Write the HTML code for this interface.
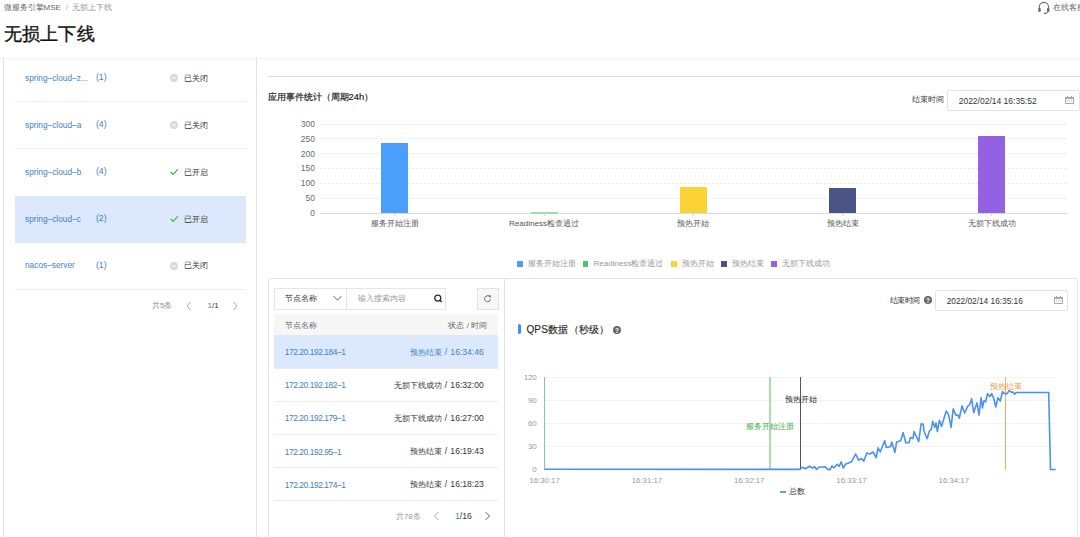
<!DOCTYPE html>
<html><head><meta charset="utf-8">
<style>
*{box-sizing:border-box;margin:0;padding:0}
html,body{width:1080px;height:537px;overflow:hidden;background:#fff}
body{position:relative;font-family:"Liberation Sans",sans-serif;font-size:8px;color:#333;font-weight:500}
.a{position:absolute}
.t{position:absolute;white-space:nowrap}
</style></head><body>
<div class="t" style="left:3.5px;top:3px;font-size:8px;line-height:10px;color:#666;">微服务引擎MSE<span style="color:#aaa;margin:0 4px 0 5px">/</span><span style="color:#999">无损上下线</span></div>
<div class="t" style="left:3.5px;top:23px;font-size:18px;line-height:22px;color:#111;font-weight:500;-webkit-text-stroke:0.35px #111;letter-spacing:0.25px;">无损上下线</div>
<svg class="a" style="left:1037px;top:0px" width="14" height="16" viewBox="0 0 14 16">
<path d="M2.3 9.5 V7 A4.6 4.6 0 0 1 11.5 7 V9.5" fill="none" stroke="#6a6a6a" stroke-width="1.1"/>
<rect x="1.3" y="8.1" width="2.4" height="3.7" fill="#6a6a6a"/><rect x="10" y="8.1" width="2.4" height="3.7" fill="#6a6a6a"/>
<path d="M11.2 11.6 Q10.9 13.2 8.6 13.3" fill="none" stroke="#6a6a6a" stroke-width="0.9"/><rect x="7" y="12.6" width="2.2" height="1.3" rx="0.5" fill="#6a6a6a"/></svg>
<div class="t" style="left:1053.1px;top:1.5px;font-size:8.4px;line-height:10.4px;color:#666;font-weight:400;">在线客服</div>
<div class="a" style="left:0px;top:56.5px;width:1080px;height:6px;background:linear-gradient(#f7f7f7,#fff);"></div>
<div class="a" style="left:3px;top:57px;width:1px;height:480px;background:#e2e2e6;"></div>
<div class="a" style="left:256px;top:57px;width:1px;height:480px;background:#e2e2e6;"></div>
<div class="t" style="left:25px;top:72.8px;font-size:8.3px;line-height:10.3px;color:#3f81c8;font-weight:400;">spring&#8211;cloud&#8211;z...</div>
<div class="t" style="left:96px;top:72.3px;font-size:8.6px;line-height:10.6px;color:#3f81c8;font-weight:400;">(1)</div>
<svg class="a" style="left:170px;top:74.3px" width="8" height="8" viewBox="0 0 8 8"><circle cx="4" cy="4" r="3.9" fill="#d9d9d9"/><rect x="1.8" y="3.5" width="4.4" height="1" fill="#fff"/></svg>
<div class="t" style="left:183.8px;top:73.8px;font-size:8px;line-height:10px;color:#333;">已关闭</div>
<div class="a" style="left:14.5px;top:101.39999999999999px;width:231px;height:1px;background:#efefef;"></div>
<div class="t" style="left:25px;top:119.69999999999999px;font-size:8.3px;line-height:10.3px;color:#3f81c8;font-weight:400;">spring&#8211;cloud&#8211;a</div>
<div class="t" style="left:96px;top:119.19999999999999px;font-size:8.6px;line-height:10.6px;color:#3f81c8;font-weight:400;">(4)</div>
<svg class="a" style="left:170px;top:121.19999999999999px" width="8" height="8" viewBox="0 0 8 8"><circle cx="4" cy="4" r="3.9" fill="#d9d9d9"/><rect x="1.8" y="3.5" width="4.4" height="1" fill="#fff"/></svg>
<div class="t" style="left:183.8px;top:120.69999999999999px;font-size:8px;line-height:10px;color:#333;">已关闭</div>
<div class="a" style="left:14.5px;top:148.29999999999998px;width:231px;height:1px;background:#efefef;"></div>
<div class="t" style="left:25px;top:166.6px;font-size:8.3px;line-height:10.3px;color:#3f81c8;font-weight:400;">spring&#8211;cloud&#8211;b</div>
<div class="t" style="left:96px;top:166.1px;font-size:8.6px;line-height:10.6px;color:#3f81c8;font-weight:400;">(4)</div>
<svg class="a" style="left:170px;top:167.6px" width="9" height="8" viewBox="0 0 9 8"><path d="M0.7 4 L3.2 6.4 L7.9 1.2" fill="none" stroke="#3cb43c" stroke-width="1.1"/></svg>
<div class="t" style="left:183.8px;top:167.6px;font-size:8px;line-height:10px;color:#333;">已开启</div>
<div class="a" style="left:14.5px;top:195.5px;width:231px;height:47px;background:#dce9fc;"></div>
<div class="t" style="left:25px;top:213.5px;font-size:8.3px;line-height:10.3px;color:#3f81c8;font-weight:400;">spring&#8211;cloud&#8211;c</div>
<div class="t" style="left:96px;top:213.0px;font-size:8.6px;line-height:10.6px;color:#3f81c8;font-weight:400;">(2)</div>
<svg class="a" style="left:170px;top:214.5px" width="9" height="8" viewBox="0 0 9 8"><path d="M0.7 4 L3.2 6.4 L7.9 1.2" fill="none" stroke="#3cb43c" stroke-width="1.1"/></svg>
<div class="t" style="left:183.8px;top:214.5px;font-size:8px;line-height:10px;color:#333;">已开启</div>
<div class="t" style="left:25px;top:260.4px;font-size:8.3px;line-height:10.3px;color:#3f81c8;font-weight:400;">nacos&#8211;server</div>
<div class="t" style="left:96px;top:259.9px;font-size:8.6px;line-height:10.6px;color:#3f81c8;font-weight:400;">(1)</div>
<svg class="a" style="left:170px;top:261.9px" width="8" height="8" viewBox="0 0 8 8"><circle cx="4" cy="4" r="3.9" fill="#d9d9d9"/><rect x="1.8" y="3.5" width="4.4" height="1" fill="#fff"/></svg>
<div class="t" style="left:183.8px;top:261.4px;font-size:8px;line-height:10px;color:#333;">已关闭</div>
<div class="a" style="left:14.5px;top:289.0px;width:231px;height:1px;background:#efefef;"></div>
<div class="t" style="left:152px;top:301px;font-size:8px;line-height:10px;color:#8c8c8c;">共5条</div>
<svg class="a" style="left:186px;top:300.5px" width="6" height="10" viewBox="0 0 6 10"><path d="M4.5 1 L1 5 L4.5 9" fill="none" stroke="#aaa" stroke-width="1"/></svg>
<div class="t" style="left:207.5px;top:300.5px;font-size:8px;line-height:10px;color:#333;font-weight:400;"><span style="color:#3f81c8">1</span>/1</div>
<svg class="a" style="left:231.5px;top:300.5px" width="6" height="10" viewBox="0 0 6 10"><path d="M1.5 1 L5 5 L1.5 9" fill="none" stroke="#aaa" stroke-width="1"/></svg>
<div class="a" style="left:267px;top:76px;width:813px;height:1px;background:#dedede;"></div>
<div class="t" style="left:267.6px;top:91px;font-size:9.4px;line-height:12px;color:#222;font-weight:500;-webkit-text-stroke:0.2px #222;">应用事件统计（周期24h）</div>
<div class="t" style="left:911.5px;top:95px;font-size:7.85px;line-height:9.85px;color:#333;">结束时间</div>
<div class="a" style="left:947px;top:90px;width:133px;height:21px;border:1px solid #e3e3e3;border-radius:2px"></div>
<div class="t" style="left:958.7px;top:95.5px;font-size:8.5px;line-height:10.5px;color:#333;">2022/02/14 16:35:52</div>
<svg class="a" style="left:1065px;top:96px" width="9" height="8" viewBox="0 0 9 8"><rect x="0.5" y="1.5" width="8" height="6" fill="none" stroke="#aaa" stroke-width="1"/><rect x="0.5" y="1.5" width="8" height="1.5" fill="#aaa"/><rect x="2" y="0" width="1" height="2" fill="#aaa"/><rect x="6" y="0" width="1" height="2" fill="#aaa"/><rect x="2" y="4.3" width="1" height="1" fill="#aaa"/><rect x="4" y="4.3" width="1" height="1" fill="#aaa"/><rect x="6" y="4.3" width="1" height="1" fill="#aaa"/></svg>
<div class="t" style="right:765px;top:119px;font-size:8.5px;line-height:10.5px;color:#6a6a6a;font-weight:400;">300</div>
<div class="a" style="left:320px;top:123.5px;width:747px;height:1px;background-image:linear-gradient(90deg,#e8e8e8 50%,transparent 50%);background-size:4px 1px"></div>
<div class="t" style="right:765px;top:133.8px;font-size:8.5px;line-height:10.5px;color:#6a6a6a;font-weight:400;">250</div>
<div class="a" style="left:320px;top:138.3px;width:747px;height:1px;background-image:linear-gradient(90deg,#e8e8e8 50%,transparent 50%);background-size:4px 1px"></div>
<div class="t" style="right:765px;top:148.6px;font-size:8.5px;line-height:10.5px;color:#6a6a6a;font-weight:400;">200</div>
<div class="a" style="left:320px;top:153.1px;width:747px;height:1px;background-image:linear-gradient(90deg,#e8e8e8 50%,transparent 50%);background-size:4px 1px"></div>
<div class="t" style="right:765px;top:163.4px;font-size:8.5px;line-height:10.5px;color:#6a6a6a;font-weight:400;">150</div>
<div class="a" style="left:320px;top:167.9px;width:747px;height:1px;background-image:linear-gradient(90deg,#e8e8e8 50%,transparent 50%);background-size:4px 1px"></div>
<div class="t" style="right:765px;top:178.2px;font-size:8.5px;line-height:10.5px;color:#6a6a6a;font-weight:400;">100</div>
<div class="a" style="left:320px;top:182.7px;width:747px;height:1px;background-image:linear-gradient(90deg,#e8e8e8 50%,transparent 50%);background-size:4px 1px"></div>
<div class="t" style="right:765px;top:193px;font-size:8.5px;line-height:10.5px;color:#6a6a6a;font-weight:400;">50</div>
<div class="a" style="left:320px;top:197.5px;width:747px;height:1px;background-image:linear-gradient(90deg,#e8e8e8 50%,transparent 50%);background-size:4px 1px"></div>
<div class="t" style="right:765px;top:207.9px;font-size:8.5px;line-height:10.5px;color:#6a6a6a;font-weight:400;">0</div>
<div class="a" style="left:320px;top:212.6px;width:747px;height:1px;background:#dcdcdc;"></div>
<div class="a" style="left:381.1px;top:143.2px;width:27px;height:69.80000000000001px;background:#4a9ffd;"></div>
<div class="a" style="left:394.1px;top:213px;width:1px;height:3px;background:#d9d9d9;"></div>
<div class="t" style="left:394.6px;transform:translateX(-50%);top:219px;font-size:8px;line-height:10px;color:#555;">服务开始注册</div>
<div class="a" style="left:530.5px;top:212px;width:27px;height:1.6px;background:#a3dbab;"></div>
<div class="a" style="left:543.5px;top:213px;width:1px;height:3px;background:#d9d9d9;"></div>
<div class="t" style="left:544.0px;transform:translateX(-50%);top:219px;font-size:8px;line-height:10px;color:#555;">Readiness检查通过</div>
<div class="a" style="left:679.8px;top:186.9px;width:27px;height:26.099999999999994px;background:#fcd336;"></div>
<div class="a" style="left:692.8px;top:213px;width:1px;height:3px;background:#d9d9d9;"></div>
<div class="t" style="left:693.2px;transform:translateX(-50%);top:219px;font-size:8px;line-height:10px;color:#555;">预热开始</div>
<div class="a" style="left:829.1px;top:187.7px;width:27px;height:25.30000000000001px;background:#4a5386;"></div>
<div class="a" style="left:842.1px;top:213px;width:1px;height:3px;background:#d9d9d9;"></div>
<div class="t" style="left:842.6px;transform:translateX(-50%);top:219px;font-size:8px;line-height:10px;color:#555;">预热结束</div>
<div class="a" style="left:978.4px;top:135.6px;width:27px;height:77.4px;background:#9461e2;"></div>
<div class="a" style="left:991.4px;top:213px;width:1px;height:3px;background:#d9d9d9;"></div>
<div class="t" style="left:991.9px;transform:translateX(-50%);top:219px;font-size:8px;line-height:10px;color:#555;">无损下线成功</div>
<div class="a" style="left:517.1px;top:261px;width:5.5px;height:5.5px;background:#4a9ffd;"></div>
<div class="t" style="left:527.8000000000001px;top:258.5px;font-size:8px;line-height:10px;color:#999;">服务开始注册</div>
<div class="a" style="left:582.9px;top:261px;width:5.5px;height:5.5px;background:#4fc46a;"></div>
<div class="t" style="left:593.6px;top:258.5px;font-size:8px;line-height:10px;color:#999;">Readiness检查通过</div>
<div class="a" style="left:671px;top:261px;width:5.5px;height:5.5px;background:#fcd336;"></div>
<div class="t" style="left:681.7px;top:258.5px;font-size:8px;line-height:10px;color:#999;">预热开始</div>
<div class="a" style="left:721px;top:261px;width:5.5px;height:5.5px;background:#4a5386;"></div>
<div class="t" style="left:731.7px;top:258.5px;font-size:8px;line-height:10px;color:#999;">预热结束</div>
<div class="a" style="left:771px;top:261px;width:5.5px;height:5.5px;background:#9461e2;"></div>
<div class="t" style="left:781.7px;top:258.5px;font-size:8px;line-height:10px;color:#999;">无损下线成功</div>
<div class="a" style="left:268px;top:278px;width:810px;height:300px;border:1px solid #e4e4e4;border-radius:3px"></div>
<div class="a" style="left:504px;top:278px;width:1px;height:260px;background:#e4e4e4;"></div>
<div class="a" style="left:274px;top:288px;width:172px;height:22px;border:1px solid #e6e6e6"></div>
<div class="a" style="left:346px;top:288px;width:1px;height:22px;background:#e6e6e6;"></div>
<div class="t" style="left:285.4px;top:294px;font-size:8px;line-height:10px;color:#333;">节点名称</div>
<svg class="a" style="left:333px;top:295px" width="9" height="7" viewBox="0 0 9 7"><path d="M0.7 1.2 L4.5 5.2 L8.3 1.2" fill="none" stroke="#666" stroke-width="1"/></svg>
<div class="t" style="left:357.8px;top:294px;font-size:8px;line-height:10px;color:#999;font-weight:400;">输入搜索内容</div>
<svg class="a" style="left:433px;top:293px" width="10" height="10" viewBox="0 0 10 10"><circle cx="4.8" cy="5" r="3" fill="none" stroke="#2a2a2a" stroke-width="1.25"/><path d="M7 7.2 L8.8 9" stroke="#2a2a2a" stroke-width="1.4"/></svg>
<div class="a" style="left:477px;top:288px;width:22px;height:22px;border:1px solid #e3e3e3;background:#f7f7f7"></div>
<svg class="a" style="left:483px;top:294px" width="9" height="9" viewBox="0 0 9 9"><path d="M6.6 2.6 A3 3 0 1 0 7.5 5.2" fill="none" stroke="#666" stroke-width="1"/><path d="M5.4 1.6 L8 1.2 L7.6 3.9 Z" fill="#666"/></svg>
<div class="a" style="left:274px;top:314.4px;width:224.2px;height:21.2px;background:#f7f7f7;"></div>
<div class="t" style="left:285px;top:320.7px;font-size:8px;line-height:10px;color:#666;">节点名称</div>
<div class="t" style="right:592.9px;top:320.7px;font-size:8px;line-height:10px;color:#666;">状态 / 时间</div>
<div class="a" style="left:274px;top:335.2px;width:224.2px;height:33.2px;background:#dce9fc;"></div>
<div class="a" style="left:274px;top:367.8px;width:224.2px;height:1px;background:#ececec;"></div>
<div class="t" style="left:284.7px;top:347.2px;font-size:8.4px;line-height:10.4px;color:#3f81c8;letter-spacing:-0.42px;font-weight:400;">172.20.192.184&#8211;1</div>
<div class="t" style="right:596.2px;top:346.7px;font-size:8px;line-height:10px;color:#3f81c8;"><span style="font-weight:400">预热结束</span><span style="font-size:8.6px;font-weight:400">&nbsp;<span style="margin:0 0.8px">/</span>&nbsp;16:34:46</span></div>
<div class="a" style="left:274px;top:400.90000000000003px;width:224.2px;height:1px;background:#ececec;"></div>
<div class="t" style="left:284.7px;top:380.3px;font-size:8.4px;line-height:10.4px;color:#3f81c8;letter-spacing:-0.42px;font-weight:400;">172.20.192.182&#8211;1</div>
<div class="t" style="right:596.2px;top:379.8px;font-size:8px;line-height:10px;color:#333;"><span style="font-weight:400">无损下线成功</span><span style="font-size:8.6px;font-weight:400">&nbsp;<span style="margin:0 0.8px">/</span>&nbsp;16:32:00</span></div>
<div class="a" style="left:274px;top:434.0px;width:224.2px;height:1px;background:#ececec;"></div>
<div class="t" style="left:284.7px;top:413.4px;font-size:8.4px;line-height:10.4px;color:#3f81c8;letter-spacing:-0.42px;font-weight:400;">172.20.192.179&#8211;1</div>
<div class="t" style="right:596.2px;top:412.9px;font-size:8px;line-height:10px;color:#333;"><span style="font-weight:400">无损下线成功</span><span style="font-size:8.6px;font-weight:400">&nbsp;<span style="margin:0 0.8px">/</span>&nbsp;16:27:00</span></div>
<div class="a" style="left:274px;top:467.1px;width:224.2px;height:1px;background:#ececec;"></div>
<div class="t" style="left:284.7px;top:446.5px;font-size:8.4px;line-height:10.4px;color:#3f81c8;letter-spacing:-0.42px;font-weight:400;">172.20.192.95&#8211;1</div>
<div class="t" style="right:596.2px;top:446.0px;font-size:8px;line-height:10px;color:#333;"><span style="font-weight:400">预热结束</span><span style="font-size:8.6px;font-weight:400">&nbsp;<span style="margin:0 0.8px">/</span>&nbsp;16:19:43</span></div>
<div class="a" style="left:274px;top:500.20000000000005px;width:224.2px;height:1px;background:#ececec;"></div>
<div class="t" style="left:284.7px;top:479.6px;font-size:8.4px;line-height:10.4px;color:#3f81c8;letter-spacing:-0.42px;font-weight:400;">172.20.192.174&#8211;1</div>
<div class="t" style="right:596.2px;top:479.1px;font-size:8px;line-height:10px;color:#333;"><span style="font-weight:400">预热结束</span><span style="font-size:8.6px;font-weight:400">&nbsp;<span style="margin:0 0.8px">/</span>&nbsp;16:18:23</span></div>
<div class="t" style="left:395.9px;top:511.5px;font-size:8px;line-height:10px;color:#999;">共78条</div>
<svg class="a" style="left:433px;top:511px" width="7" height="10" viewBox="0 0 7 10"><path d="M5.5 1 L1.5 5 L5.5 9" fill="none" stroke="#aaa" stroke-width="1"/></svg>
<div class="t" style="left:455px;top:511px;font-size:8.6px;line-height:10.6px;color:#333;font-weight:400;"><span style="color:#3f81c8">1</span>/16</div>
<svg class="a" style="left:484px;top:511px" width="7" height="10" viewBox="0 0 7 10"><path d="M1.5 1 L5.5 5 L1.5 9" fill="none" stroke="#666" stroke-width="1"/></svg>
<div class="a" style="left:518px;top:324px;width:3.2px;height:10.2px;background:#3d8ef7;border-radius:2px"></div>
<div class="t" style="left:526.4px;top:323.5px;font-size:10px;line-height:12px;color:#2a2a2a;font-weight:500;letter-spacing:0.2px;-webkit-text-stroke:0.15px #2a2a2a;">QPS数据（秒级）</div>
<svg class="a" style="left:613px;top:325.5px" width="8" height="8" viewBox="0 0 8 8"><circle cx="4" cy="4" r="4" fill="#666"/><text x="4" y="6.6" font-size="6.5" font-weight="bold" text-anchor="middle" fill="#fff" font-family="Liberation Sans">?</text></svg>
<div class="t" style="left:889.6px;top:295.5px;font-size:8px;line-height:10px;color:#333;letter-spacing:-0.4px;">结束时间</div>
<svg class="a" style="left:923.5px;top:296px" width="8" height="8" viewBox="0 0 8 8"><circle cx="4" cy="4" r="4" fill="#666"/><text x="4" y="6.6" font-size="6.5" font-weight="bold" text-anchor="middle" fill="#fff" font-family="Liberation Sans">?</text></svg>
<div class="a" style="left:935px;top:289.6px;width:133px;height:21px;border:1px solid #e3e3e3;border-radius:2px"></div>
<div class="t" style="left:946.7px;top:295.5px;font-size:8.3px;line-height:10.3px;color:#333;">2022/02/14 16:35:16</div>
<svg class="a" style="left:1053.5px;top:296px" width="9" height="8" viewBox="0 0 9 8"><rect x="0.5" y="1.5" width="8" height="6" fill="none" stroke="#aaa" stroke-width="1"/><rect x="0.5" y="1.5" width="8" height="1.5" fill="#aaa"/><rect x="2" y="0" width="1" height="2" fill="#aaa"/><rect x="6" y="0" width="1" height="2" fill="#aaa"/><rect x="2" y="4.3" width="1" height="1" fill="#aaa"/><rect x="4" y="4.3" width="1" height="1" fill="#aaa"/><rect x="6" y="4.3" width="1" height="1" fill="#aaa"/></svg>
<div class="t" style="right:543.6px;top:465.3px;font-size:8px;line-height:10px;color:#999;letter-spacing:-0.2px;font-weight:400;">0</div>
<div class="t" style="right:543.6px;top:442.225px;font-size:8px;line-height:10px;color:#999;letter-spacing:-0.2px;font-weight:400;">30</div>
<div class="a" style="left:544.6px;top:445.725px;width:511.1px;height:1px;background:#f4f4f4;"></div>
<div class="t" style="right:543.6px;top:419.15px;font-size:8px;line-height:10px;color:#999;letter-spacing:-0.2px;font-weight:400;">60</div>
<div class="a" style="left:544.6px;top:422.65px;width:511.1px;height:1px;background:#f4f4f4;"></div>
<div class="t" style="right:543.6px;top:396.075px;font-size:8px;line-height:10px;color:#999;letter-spacing:-0.2px;font-weight:400;">90</div>
<div class="a" style="left:544.6px;top:399.575px;width:511.1px;height:1px;background:#f4f4f4;"></div>
<div class="t" style="right:543.6px;top:373.0px;font-size:8px;line-height:10px;color:#999;letter-spacing:-0.2px;font-weight:400;">120</div>
<div class="a" style="left:544.6px;top:376.5px;width:511.1px;height:1px;background:#f4f4f4;"></div>
<div class="t" style="left:544.6px;transform:translateX(-50%);top:476.3px;font-size:7.8px;line-height:9.8px;color:#999;">16:30:17</div>
<div class="t" style="left:646.9px;transform:translateX(-50%);top:476.3px;font-size:7.8px;line-height:9.8px;color:#999;">16:31:17</div>
<div class="t" style="left:749.2px;transform:translateX(-50%);top:476.3px;font-size:7.8px;line-height:9.8px;color:#999;">16:32:17</div>
<div class="t" style="left:851.5px;transform:translateX(-50%);top:476.3px;font-size:7.8px;line-height:9.8px;color:#999;">16:33:17</div>
<div class="t" style="left:953.8px;transform:translateX(-50%);top:476.3px;font-size:7.8px;line-height:9.8px;color:#999;">16:34:17</div>
<div class="a" style="left:768.9px;top:377px;width:2px;height:92.5px;background:#a9ddb0;"></div>
<div class="a" style="left:800px;top:377px;width:1.2px;height:92.5px;background:#555;"></div>
<div class="a" style="left:1005px;top:377px;width:1.2px;height:92.5px;background:#f2ac62;"></div>
<div class="t" style="left:770px;transform:translateX(-50%);top:421.5px;font-size:8px;line-height:10px;color:#3fae3f;">服务开始注册</div>
<div class="t" style="left:785.4px;top:395px;font-size:8px;line-height:10px;color:#222;">预热开始</div>
<div class="t" style="left:990.3px;top:382px;font-size:8px;line-height:10px;color:#e99a45;">预热结束</div>
<div class="a" style="left:544.1px;top:377px;width:1.1px;height:92.5px;background:#8db6ec;"></div>
<svg class="a" style="left:0;top:0" width="1080" height="537" viewBox="0 0 1080 537"><path d="M544.6 469.3 L799.2 469.4 L802.3 467.3 L805.4 468.8 L809.5 466.3 L812.5 468.0 L814.6 466.7 L816.6 469.4 L818.7 467.3 L824.8 466.7 L827.9 469.4 L830.0 469.8 L832.0 465.9 L834.0 468.0 L837.1 464.3 L839.2 466.3 L841.2 461.8 L843.3 468.0 L845.3 464.3 L851.5 461.8 L855.6 454.0 L858.6 460.2 L861.7 458.5 L863.8 461.2 L866.8 453.0 L869.9 454.0 L873.0 452.0 L876.1 457.7 L878.1 447.9 L880.2 452.0 L884.7 440.7 L886.3 447.5 L890.4 446.8 L891.8 442.1 L894.9 452.4 L896.6 442.1 L900.7 440.7 L903.1 432.5 L905.8 442.7 L908.9 442.7 L910.5 437.6 L913.0 438.6 L914.0 431.5 L918.7 441.7 L921.1 423.7 L923.2 424.3 L924.1 431.5 L927.2 438.6 L929.2 431.5 L931.3 429.4 L932.7 421.2 L934.8 427.4 L936.0 422.9 L937.4 431.5 L939.5 420.2 L941.5 426.4 L946.2 411.0 L948.7 415.1 L951.1 427.4 L953.2 408.9 L955.9 415.1 L957.9 415.1 L959.3 418.2 L962.0 405.9 L964.7 413.0 L967.5 406.5 L969.6 404.8 L971.6 398.7 L973.7 412.6 L977.0 402.8 L979.0 415.1 L981.1 397.7 L982.5 407.9 L983.9 400.7 L985.6 401.8 L987.6 393.6 L989.7 396.6 L991.7 393.6 L993.8 398.7 L995.8 406.9 L997.9 397.7 L1000.3 401.1 L1002.4 391.5 L1004.4 393.6 L1007.1 393.6 L1009.1 390.5 L1011.2 392.1 L1013.2 392.1 L1014.7 394.2 L1016.3 392.5 L1048.7 392.5 L1050.5 469.5 L1055.7 469.5" fill="none" stroke="#4a92ee" stroke-width="1.6" stroke-linejoin="round"/></svg>
<div class="a" style="left:779.6px;top:491.3px;width:6.2px;height:1.4px;background:#5a9cf2;"></div>
<div class="t" style="left:789px;top:487px;font-size:8px;line-height:10px;color:#333;">总数</div>
</body></html>
